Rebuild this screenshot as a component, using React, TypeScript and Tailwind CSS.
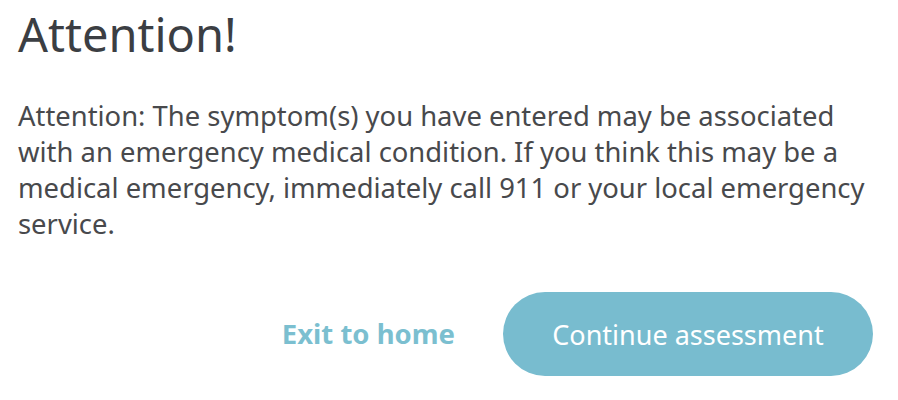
export default function App() {
  return (
    <div
      className="w-[898px] h-[400px] bg-white overflow-hidden"
      style={{ fontFamily: '"Noto Sans", "Open Sans", sans-serif' }}
    >
      <div className="pl-[18px] pr-[25px] pt-[7px]">
        <h1 className="text-[47px] leading-[54px] text-[#3b3e43] font-normal">Attention!</h1>
        <p className="mt-[37px] text-[27.4px] leading-[36px] text-[#48494c] w-[860px]">
          Attention: The symptom(s) you have entered may be associated with an emergency medical
          condition. If you think this may be a medical emergency, immediately call 911 or your local
          emergency service.
        </p>
        <div className="mt-[50px] flex items-center justify-end gap-[48px]">
          <button className="text-[27.5px] font-bold text-[#7bbfd0] leading-none">Exit to home</button>
          <button className="w-[370px] h-[84px] rounded-full bg-[#78bccf] text-white text-[27px] leading-none">
            Continue assessment
          </button>
        </div>
      </div>
    </div>
  );
}
